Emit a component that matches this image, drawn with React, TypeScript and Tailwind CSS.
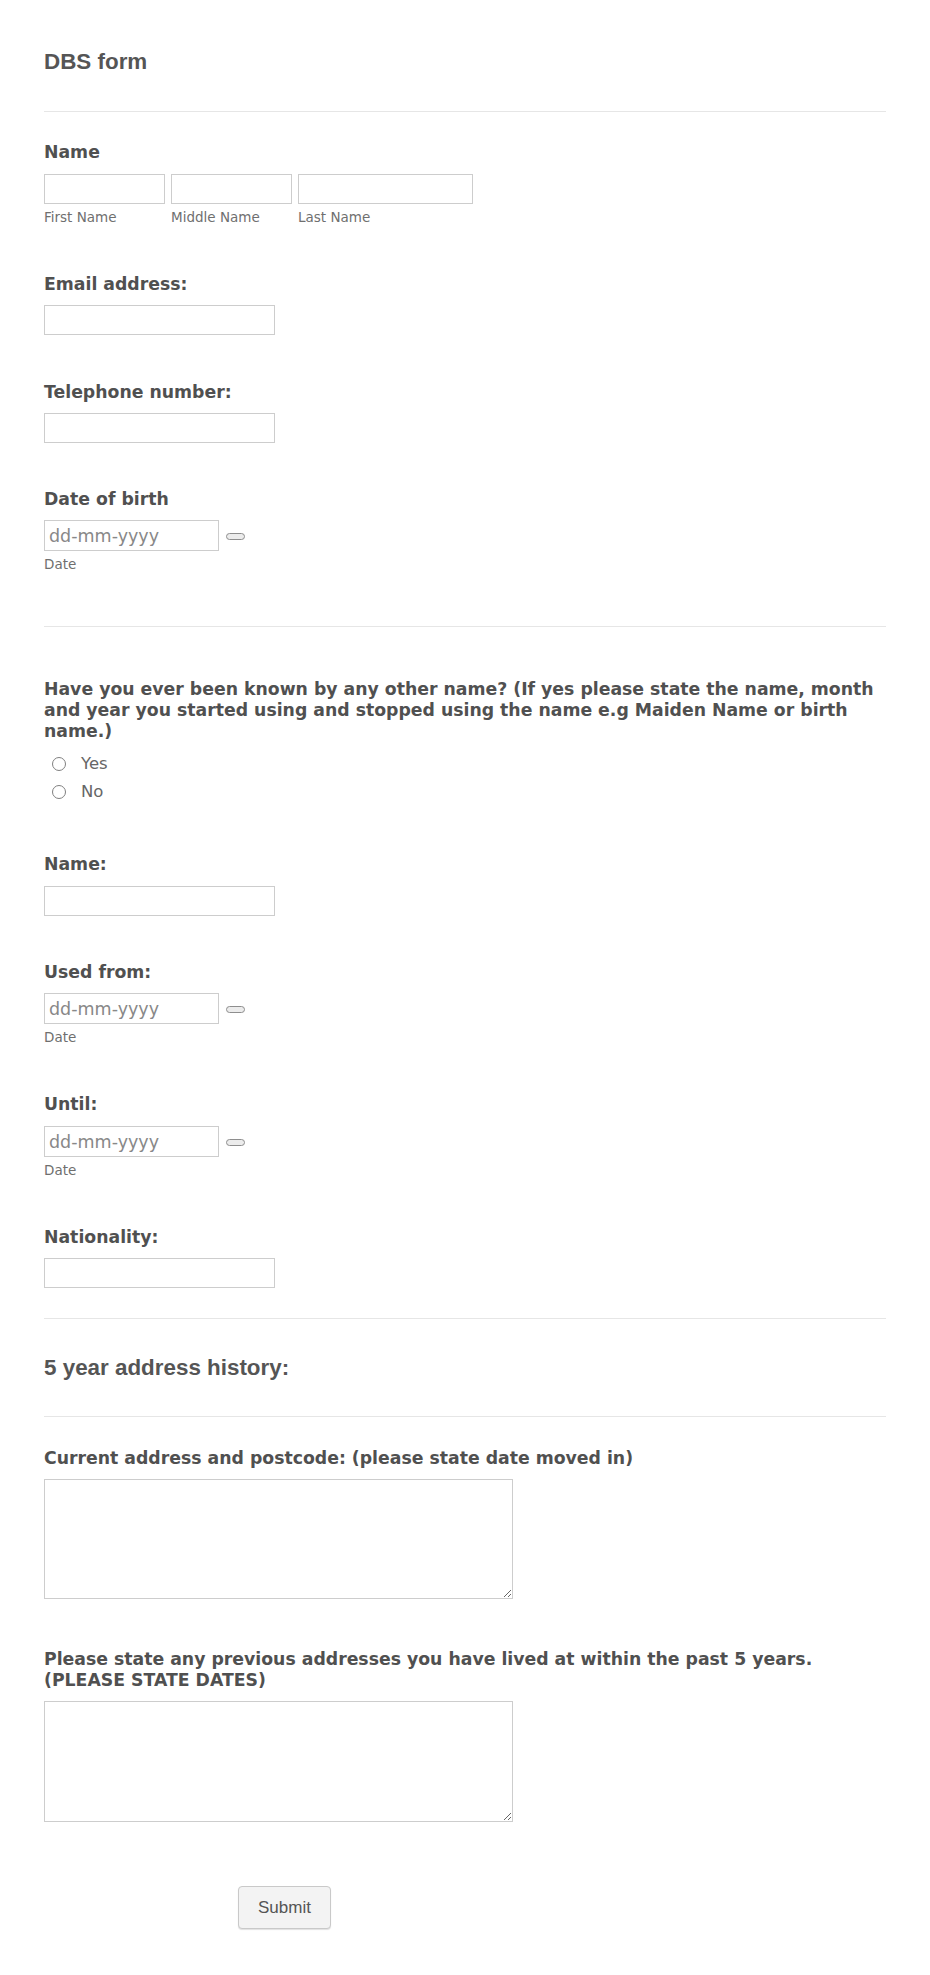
import React from "react";

const label = "block font-bold text-[17.3px] leading-[21px] text-[#505050]";
const sub = "block text-[13.5px] leading-[16px] text-[#6f6f6f]";
const box =
    "block h-[30px] border border-[#cdcdcd] bg-white px-[4px] text-[17.5px] text-[#555] outline-none placeholder:text-[#888]";
const heading = "font-['Liberation_Sans',Arial,sans-serif] text-[22.4px] font-bold leading-[26px] text-[#555]";

function Divider({ className = "" }: { className?: string }) {
    return <div className={`h-px bg-[#e6e6e6] ${className}`} />;
}

function DateField({ top }: { top: string }) {
    return (
        <div className={top}>
            <div className="flex items-center">
                <input type="text" placeholder="dd-mm-yyyy" className={`${box} w-[175px] h-[31px]`} />
                {/* calendar trigger */}
                <span className="ml-[7px] mt-px h-[7px] w-[19px] rounded-full border border-[#8e8e8e] bg-[#ececec]" />
            </div>
            <span className={`${sub} mt-[5px]`}>Date</span>
        </div>
    );
}

function Radio({ text }: { text: string }) {
    return (
        <label className="flex h-[28px] items-center">
            <span className="ml-[8px] h-[14px] w-[14px] rounded-full border border-[#808080] bg-white" />
            <span className="ml-[15px] text-[16.5px] text-[#666]">{text}</span>
        </label>
    );
}

export default function App() {
    return (
        <div className="min-h-[1975px] w-full bg-white px-[44px] pt-[49px] pb-[46px] font-['DejaVu_Sans',Verdana,sans-serif]">
            <h1 className={heading}>DBS form</h1>
            <Divider className="mt-[36px]" />

            {/* full name */}
            <span className={`${label} mt-[30px]`}>Name</span>
            <div className="mt-[11px] flex gap-[6px]">
                <div>
                    <input type="text" className={`${box} w-[121px]`} />
                    <span className={`${sub} mt-[5px]`}>First Name</span>
                </div>
                <div>
                    <input type="text" className={`${box} w-[121px]`} />
                    <span className={`${sub} mt-[5px]`}>Middle Name</span>
                </div>
                <div>
                    <input type="text" className={`${box} w-[175px]`} />
                    <span className={`${sub} mt-[5px]`}>Last Name</span>
                </div>
            </div>

            <span className={`${label} mt-[49px]`}>Email address:</span>
            <input type="email" className={`${box} mt-[10px] w-[231px]`} />

            <span className={`${label} mt-[47px]`}>Telephone number:</span>
            <input type="tel" className={`${box} mt-[10px] w-[231px]`} />

            <span className={`${label} mt-[46px]`}>Date of birth</span>
            <DateField top="mt-[10px]" />

            <Divider className="mt-[54px]" />

            {/* other names */}
            <p className={`${label} mt-[52px]`}>
                Have you ever been known by any other name? (If yes please state the name, month and year you
                started using and stopped using the name e.g Maiden Name or birth name.)
            </p>
            <div className="mt-[8px]">
                <Radio text="Yes" />
                <Radio text="No" />
            </div>

            <span className={`${label} mt-[48px]`}>Name:</span>
            <input type="text" className={`${box} mt-[11px] w-[231px]`} />

            <span className={`${label} mt-[46px]`}>Used from:</span>
            <DateField top="mt-[10px]" />

            <span className={`${label} mt-[49px]`}>Until:</span>
            <DateField top="mt-[11px]" />

            <span className={`${label} mt-[49px]`}>Nationality:</span>
            <input type="text" className={`${box} mt-[10px] w-[231px]`} />

            <Divider className="mt-[30px]" />
            <h2 className={`${heading} mt-[36px]`}>5 year address history:</h2>
            <Divider className="mt-[35px]" />

            {/* addresses */}
            <span className={`${label} mt-[31px]`}>Current address and postcode: (please state date moved in)</span>
            <textarea className="mt-[10px] block h-[120px] w-[469px] border border-[#cdcdcd] bg-white outline-none" />

            <p className={`${label} mt-[50px]`}>
                Please state any previous addresses you have lived at within the past 5 years. (PLEASE STATE DATES)
            </p>
            <textarea className="mt-[10px] block h-[121px] w-[469px] border border-[#cdcdcd] bg-white outline-none" />

            <button
                type="submit"
                className="mt-[64px] ml-[194px] h-[43px] w-[93px] rounded-[4px] border border-[#c9c9c9] bg-[#f3f3f3] font-['Liberation_Sans',Arial,sans-serif] text-[17px] text-[#555] shadow-[0_1px_1px_rgba(0,0,0,0.12)]"
            >
                Submit
            </button>
        </div>
    );
}
